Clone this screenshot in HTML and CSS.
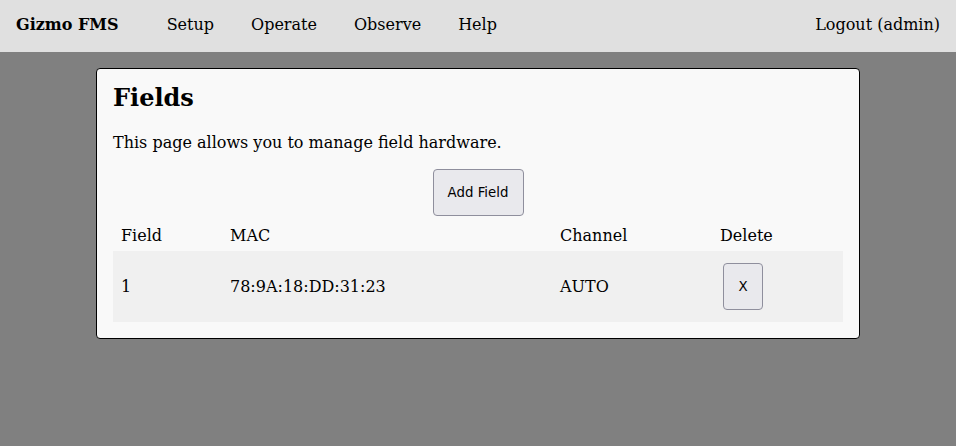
FILE: index.html
```html
<!DOCTYPE html>
<html>
<head>
<meta charset="utf-8">
<link rel="stylesheet" href="styles.css">
</head>
<body>
<nav class="nav">
  <a class="brand" href="#">Gizmo FMS</a>
  <a class="link" href="#">Setup</a>
  <a class="link" href="#">Operate</a>
  <a class="link" href="#">Observe</a>
  <a class="link" href="#">Help</a>
  <a class="logout" href="#">Logout (admin)</a>
</nav>
<main class="card">
  <h1 class="title">Fields</h1>
  <p class="desc">This page allows you to manage field hardware.</p>
  <div class="actions"><button class="btn btn-add">Add Field</button></div>
  <table class="table">
    <thead>
      <tr><th class="c1">Field</th><th class="c2">MAC</th><th class="c3">Channel</th><th class="c4">Delete</th></tr>
    </thead>
    <tbody>
      <tr class="row"><td>1</td><td>78:9A:18:DD:31:23</td><td>AUTO</td><td><button class="btn btn-del">X</button></td></tr>
    </tbody>
  </table>
</main>
</body>
</html>
```
FILE: styles.css
```css
html, body {
  margin: 0;
  padding: 0;
}
body {
  background: #808080;
  font-family: "DejaVu Serif", serif;
  font-size: 16px;
  color: #000;
}
.nav {
  display: flex;
  align-items: flex-start;
  height: 52px;
  background: #e0e0e0;
  padding: 15px 16px 0 16px;
  box-sizing: border-box;
}
.nav a {
  color: #000;
  text-decoration: none;
}
.brand {
  font-weight: bold;
  margin-right: 48px;
}
.link {
  margin-right: 37px;
}
.logout {
  margin-left: auto;
}
.card {
  display: block;
  margin: 16px 96px 0 96px;
  background: #f9f9f9;
  border: 1px solid #000;
  border-radius: 4px;
  padding: 14px 16px 16px 16px;
}
.title {
  font-size: 24px;
  font-weight: bold;
  margin: 0 0 21px 0;
}
.desc {
  margin: 0 0 17px 0;
}
.actions {
  display: flex;
  justify-content: center;
}
.btn {
  font-family: "DejaVu Sans", sans-serif;
  font-size: 13.33px;
  background: #e9e9ed;
  border: 1px solid #8f8f9d;
  border-radius: 4px;
  color: #000;
  padding: 0;
}
.btn-add {
  width: 91px;
  height: 47px;
}
.btn-del {
  width: 40px;
  height: 47px;
  margin-left: 3px;
}
.table {
  width: 100%;
  border-collapse: collapse;
  margin-top: 4px;
}
.table th {
  font-weight: normal;
  text-align: left;
  padding: 6px 8px;
}
.table td {
  padding: 12px 8px;
  text-align: left;
}
.row {
  background: #f0f0f0;
}
.c1 { width: 93px; }
.c2 { width: 314px; }
.c3 { width: 144px; }
```
